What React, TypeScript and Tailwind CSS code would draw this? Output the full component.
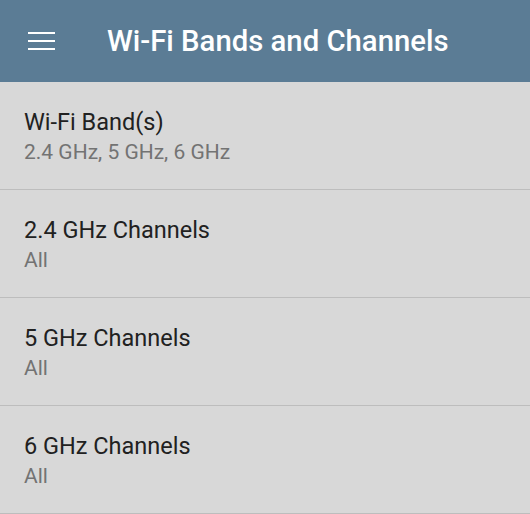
import React from 'react';

interface Setting {
    title: string;
    value: string;
}

const settings: Setting[] = [
    { title: 'Wi-Fi Band(s)', value: '2.4 GHz, 5 GHz, 6 GHz' },
    { title: '2.4 GHz Channels', value: 'All' },
    { title: '5 GHz Channels', value: 'All' },
    { title: '6 GHz Channels', value: 'All' },
];

const App: React.FC = () => {
    return (
        <div className="w-[530px] h-[514px] overflow-hidden bg-[#d8d8d8] font-['Roboto',sans-serif]">
            <div className="flex items-center h-[82px] bg-[#5b7c95]">
                <button className="ml-[28px] flex flex-col gap-[5.5px] w-[27px]">
                    <span className="block h-[2.5px] bg-white" />
                    <span className="block h-[2.5px] bg-white" />
                    <span className="block h-[2.5px] bg-white" />
                </button>
                <h1 className="ml-[52px] pt-[2px] text-[29.3px] font-medium text-white">
                    Wi-Fi Bands and Channels
                </h1>
            </div>

            <div className="flex flex-col">
                {settings.map((s) => (
                    <div key={s.title} className="h-[108px] border-b border-[#bdbdbd] px-[24px] pt-[26px]">
                        <p className="text-[23.5px] leading-[28px] text-[#212121]">{s.title}</p>
                        <p className="mt-[3px] text-[21px] leading-[26px] text-[#737373]">{s.value}</p>
                    </div>
                ))}
            </div>
        </div>
    );
};

export default App;
